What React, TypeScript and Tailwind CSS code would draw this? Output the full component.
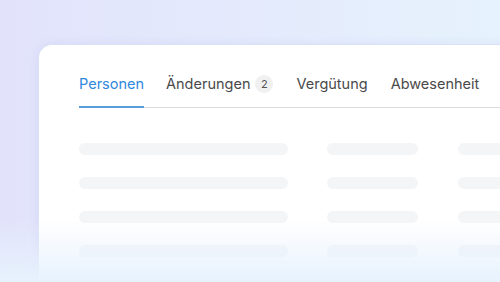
import React from "react";

const rows = [0, 1, 2, 3];

export default function App() {
  return (
    <div
      className="relative w-[500px] h-[282px] overflow-hidden bg-gradient-to-r from-[#e2e3fb] to-[#e6f2fd]"
      style={{ fontFamily: "Inter, 'Noto Sans', sans-serif" }}
    >
      <div className="pl-[38px] pt-[44px]">
        <div className="w-[500px] h-[300px] bg-white rounded-tl-[14px] border-l border-t border-[#dde1f6] shadow-[0_0_10px_rgba(160,170,230,0.2)] pl-[40px] pt-[29px]">
          <div className="flex items-end border-b border-[#dcdcde]">
            <div className="pb-[12px] border-b-2 border-[#5a9fdc] -mb-px text-[14.5px] leading-[20px] text-[#2f88dc]">
              Personen
            </div>
            <div className="ml-[22px] pb-[13px] flex items-center text-[14.5px] leading-[20px] text-[#4a4a4a]">
              Änderungen
              <span className="ml-[5px] w-[18px] h-[18px] rounded-full bg-[#f0f0f1] text-[11px] leading-[18px] text-center text-[#555]">
                2
              </span>
            </div>
            <div className="ml-[23px] pb-[13px] text-[14.5px] leading-[20px] text-[#4a4a4a]">
              Vergütung
            </div>
            <div className="ml-[23px] pb-[13px] text-[14.5px] leading-[20px] text-[#4a4a4a] whitespace-nowrap">
              Abwesenheit
            </div>
          </div>
          <div className="flex flex-col gap-[22px] pt-[35px]">
            {rows.map((r) => (
              <div key={r} className="flex h-[12px]">
                <div className="w-[209px] h-[12px] rounded-full bg-[#f4f5f7]" />
                <div className="ml-[39px] w-[91px] h-[12px] rounded-full bg-[#f4f5f7]" />
                <div className="ml-[40px] w-[80px] h-[12px] rounded-full bg-[#f4f5f7]" />
              </div>
            ))}
          </div>
        </div>
      </div>
      <div className="absolute left-0 right-0 bottom-0 h-[62px] bg-gradient-to-b from-[rgba(232,243,254,0)] to-[#e7f2fd]" />
    </div>
  );
}
